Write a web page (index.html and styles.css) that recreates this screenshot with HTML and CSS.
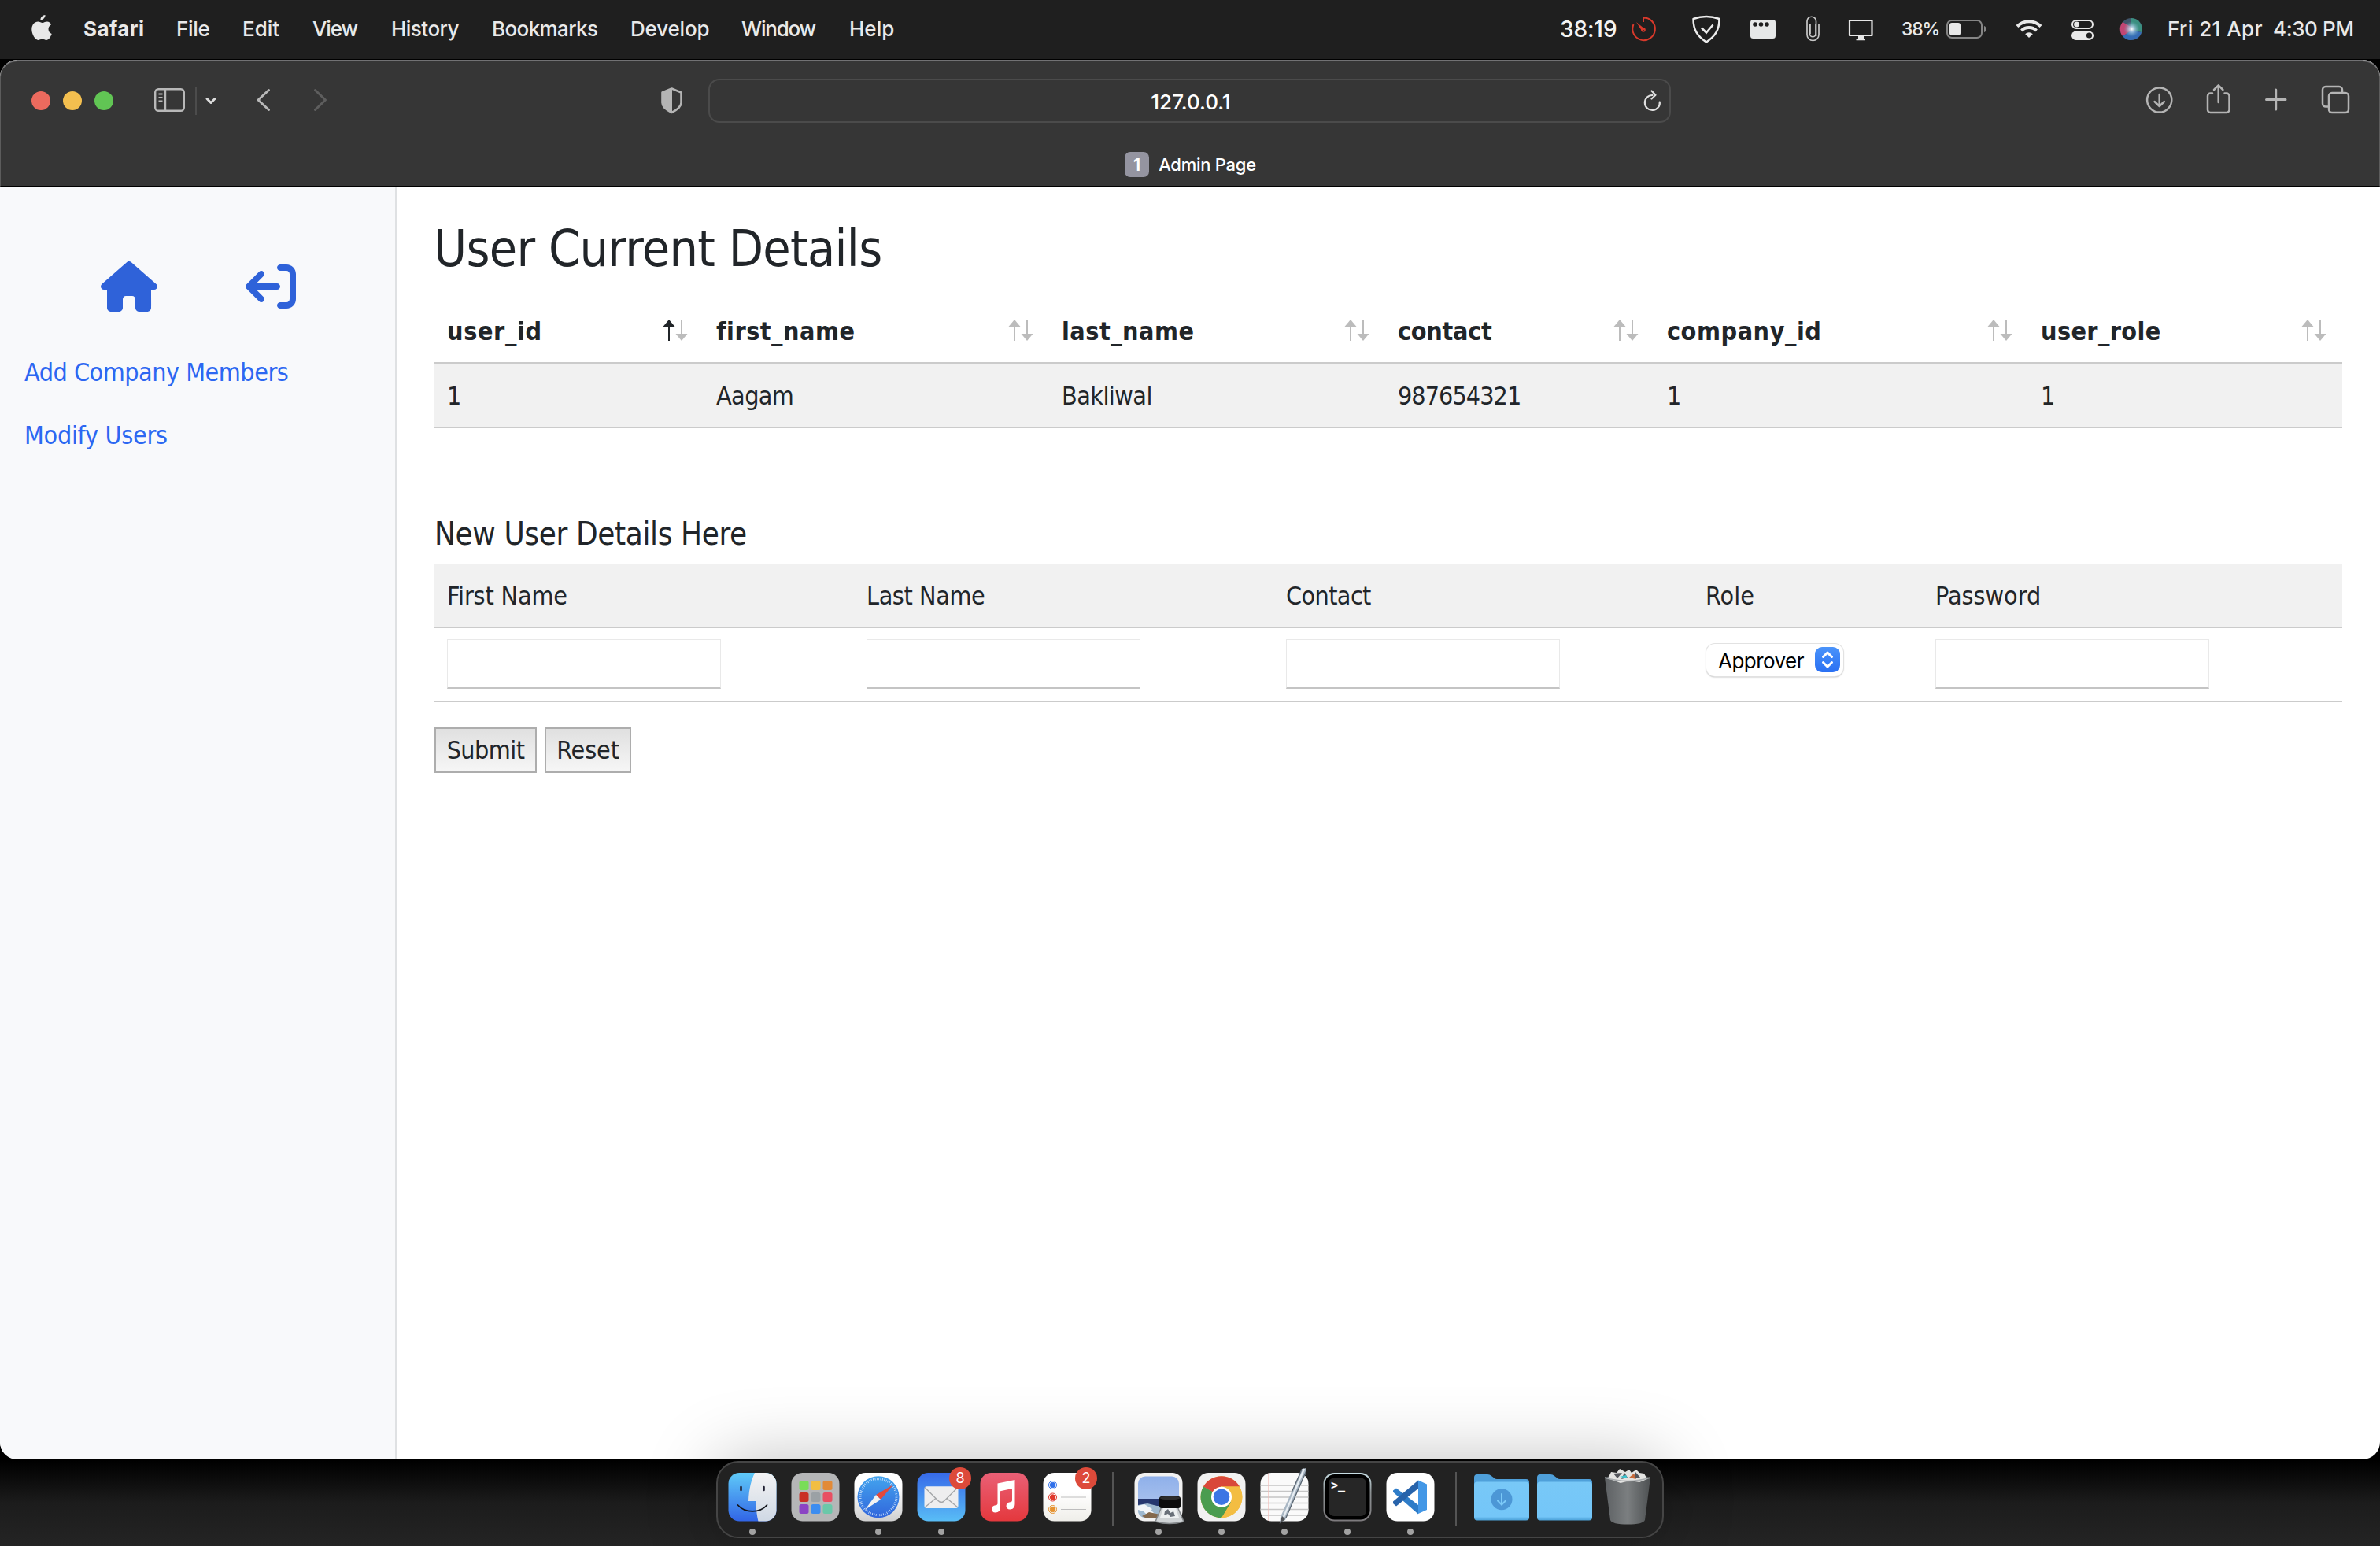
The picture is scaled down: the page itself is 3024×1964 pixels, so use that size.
FILE: index.html
```html
<!DOCTYPE html>
<html lang="en">
<head>
<meta charset="utf-8">
<title>Admin Page</title>
<link rel="stylesheet" href="styles.css">
</head>
<body>
<header class="menubar">
  <svg class="apple" viewBox="38 18 30 36"><path fill="#e8e8e8" d="M57.5 19c.3 3-2.600 6.300-6 6.500-.4-3.300 2.800-6.400 6-6.500zM65 31.200c-2.300 1.400-3.500 3.300-3.500 5.700 0 2.900 1.700 5 4.200 6-1.200 3.800-4 8-6.800 8-2 0-2.600-1.200-5.200-1.200s-3.400 1.200-5.200 1.200c-3.700 0-8.200-7.300-8.200-13.600 0-6 3.800-9.700 7.900-9.700 2.300 0 4.300 1.500 5.500 1.500s3.500-1.700 6.300-1.700c2.100 0 3.900 1.200 5 3.800z"/></svg>
  <nav class="menus">
    <span class="app">Safari</span><span class="file">File</span><span>Edit</span><span class="view">View</span><span class="history">History</span><span class="bookmarks">Bookmarks</span><span class="develop">Develop</span><span class="win">Window</span><span>Help</span>
  </nav>
  <div class="status">
    <span class="timer">38:19</span>
    <svg width="36" viewBox="2070 0 36 76"><path d="M2088 28v-5.500a14.300 14.300 0 1 1-12.500 8.500" fill="none" stroke="#d8392b" stroke-width="2"/><path d="M2079 28l11 9-3.500 3z" fill="#d8392b"/><circle cx="2088" cy="38" r="2" fill="none" stroke="#d8392b" stroke-width="1.600"/></svg>
    <svg width="40" viewBox="2148 0 40 76" class="g42"><path d="M2151.500 24c11-4 22-4 33 0 0 14-5 22-16.500 29.500-11.500-7.500-16.500-15.500-16.500-29.500z" fill="none" stroke="#ececec" stroke-width="2.500" stroke-linejoin="round"/><path d="M2162 35.500l6 6 8.500-10" fill="none" stroke="#ececec" stroke-width="2.600"/></svg>
    <svg width="32" viewBox="2224 0 32 76" class="g36"><rect x="2224" y="25" width="32" height="24" rx="3.500" fill="#e6e8e8"/><g fill="#1f1f1f"><circle cx="2230" cy="31" r="2.800"/><circle cx="2237.500" cy="31" r="2.800"/><circle cx="2245" cy="31" r="2.800"/></g></svg>
    <svg width="18" viewBox="2294 0 18 76" class="g38"><path d="M2307 30v13a3.500 3.500 0 0 1-7.500 0V31M2307.500 46V27a5.500 5.500 0 0 0-11.500 0v17a7.500 7.500 0 0 0 15 0V30M2300 43V31" fill="none" stroke="#c8c8c8" stroke-width="1.700"/></svg>
    <svg width="32" viewBox="2348 0 32 76" class="g36"><path d="M2350 26h28.500v19H2350z" fill="none" stroke="#e6e6e6" stroke-width="2.200" stroke-linejoin="round"/><path d="M2361 45h7v4h2v2.300h-11.500V49h2.500z" fill="#e6e6e6"/></svg>
    <span class="percent">38%</span>
    <svg width="54" viewBox="2472 0 54 76" class="g6"><rect x="2474" y="26" width="44" height="22" rx="6" fill="none" stroke="#858585" stroke-width="2"/><rect x="2477" y="29" width="14" height="16" rx="3" fill="#e8e8e8"/><path d="M2521 33c3.500 1 3.500 7 0 8z" fill="#858585"/></svg>
    <svg width="34" viewBox="2561 0 34 76" class="g35"><g fill="none" stroke="#e8e8e8" stroke-width="4"><path d="M2563 33.500a21 21 0 0 1 30 0"/><path d="M2568.500 39a13.500 13.500 0 0 1 19 0"/></g><path d="M2578 48l-4.800-4.800a6.800 6.800 0 0 1 9.600 0z" fill="#e8e8e8"/></svg>
    <svg width="30" viewBox="2631 0 30 76" class="g36"><rect x="2633" y="26" width="26" height="10" rx="5" fill="none" stroke="#e8e8e8" stroke-width="2"/><circle cx="2638.500" cy="31" r="3.400" fill="#e8e8e8"/><rect x="2632" y="39.500" width="28" height="11.500" rx="5.700" fill="#e8e8e8"/><circle cx="2654.500" cy="45" r="3.600" fill="#1f1f1f"/></svg>
    <svg width="30" viewBox="2693 0 30 76" class="g32"><defs><radialGradient id="siri"><stop offset="0" stop-color="#fff"/><stop offset=".35" stop-color="#b8d4ea" stop-opacity=".8"/><stop offset="1" stop-color="#6ab" stop-opacity="0"/></radialGradient></defs><circle cx="2708" cy="37" r="14" fill="#41566b"/><path d="M2708 23a14 14 0 0 1 13 18l-13-4z" fill="#3b8f80"/><path d="M2697 28a14 14 0 0 0 0 18l9-6 1-6z" fill="#c24573"/><path d="M2697 46a14 14 0 0 0 24-5l-13-2z" fill="#356cb5"/><circle cx="2708.500" cy="37" r="10" fill="url(#siri)"/></svg>
    <span class="date">Fri 21 Apr</span><span class="clock">4:30 PM</span>
  </div>
</header>

<main class="window">
  <div class="chrome">
    <div class="toolbar">
      <svg width="240" viewBox="36 78 240 100"><circle cx="52" cy="128" r="12" fill="#ec6a5e"/><circle cx="92" cy="128" r="12" fill="#f4bf4f"/><circle cx="132" cy="128" r="12" fill="#61c554"/><g fill="none" stroke="#b8b8b8" stroke-width="2.400"><rect x="197.200" y="113.200" width="36.600" height="27.600" rx="4"/><path d="M210 113v28"/><path d="M201.500 119.500h5M201.500 124h5M201.500 128.500h5" stroke-width="2"/></g><path d="M249 110v36" stroke="#4c4c4c" stroke-width="2"/><path d="M263 125.500l5 5 5-5" fill="none" stroke="#dcdcdc" stroke-width="3" stroke-linecap="round" stroke-linejoin="round"/></svg>
      <svg width="96" viewBox="324 78 96 100" class="g48"><path d="M341.500 114.500l-13.500 12.500 13.500 12.500" fill="none" stroke="#b8b8b8" stroke-width="3" stroke-linecap="round" stroke-linejoin="round"/><path d="M400.500 114.500l13 12.500-13 12.500" fill="none" stroke="#5e5e5e" stroke-width="3" stroke-linecap="round" stroke-linejoin="round"/></svg>
      <svg width="30" viewBox="838 78 30 100" class="g418"><path d="M853.500 112.500l12 5v13c0 5-5 9-12 12.500-7-3.500-12-7.500-12-12.500v-13z" fill="none" stroke="#b4b4b4" stroke-width="2.600" stroke-linejoin="round"/><path d="M854 112v31c-7-3.500-12.500-7.500-12.500-12.500v-13z" fill="#b4b4b4"/></svg>
      <div class="address"><span class="url">127.0.0.1</span>
        <svg class="reload" viewBox="2086 112 26 30"><path d="M2099.500 121a9.500 9.500 0 1 0 9.300 8.500" fill="none" stroke="#dedede" stroke-width="2.200" stroke-linecap="round"/><path d="M2098.500 115.500l5 5.300-5 4.700" fill="none" stroke="#dedede" stroke-width="2.200" stroke-linecap="round" stroke-linejoin="round"/></svg>
      </div>
      <svg width="262" viewBox="2726 78 262 100" class="tools"><g fill="none" stroke="#b4b4b4" stroke-width="2.500" stroke-linecap="round" stroke-linejoin="round"><circle cx="2743.700" cy="127" r="15.600"/><path d="M2743.700 120v14.500M2737.500 129l6.200 6 6.200-6"/><path d="M2811 118.500h-2.500a3.500 3.500 0 0 0-3.500 3.500v17.500a3.500 3.500 0 0 0 3.500 3.500h20.500a3.500 3.500 0 0 0 3.500-3.500V122a3.500 3.500 0 0 0-3.500-3.500h-2.500M2818.700 130v-21.500M2813 114l5.700-5.700 5.700 5.700"/><path d="M2879.500 126.500h24.500M2891.700 114v25" stroke-width="3"/><rect x="2959" y="118" width="25" height="25" rx="4"/><path d="M2958 135.500h-3a4 4 0 0 1-4-4V114a4 4 0 0 1 4-4h17a4 4 0 0 1 4 4v3.500"/></g></svg>
    </div>
    <div class="tab"><span class="favicon">1</span><span class="tab-title">Admin Page</span></div>
  </div>

  <div class="page">
    <aside class="sidebar">
      <div class="shortcuts">
        <svg width="72" height="64" viewBox="0 0 576 512"><path fill="#2f62d9" d="M575.800 255.500c0 18-15 32.100-32 32.100h-32l.7 160.200c0 2.700-.2 5.400-.5 8.100V472c0 22.100-17.900 40-40 40H456c-1.100 0-2.200 0-3.300-.1c-1.400 .1-2.800 .1-4.200 .1H416 392c-22.100 0-40-17.900-40-40V448 384c0-17.700-14.300-32-32-32H256c-17.700 0-32 14.300-32 32v64 24c0 22.100-17.900 40-40 40H160 128.100c-1.500 0-3-.1-4.500-.2c-1.200 .1-2.400 .2-3.600 .2H104c-22.100 0-40-17.900-40-40V360c0-.9 0-1.900 .1-2.800V287.600H32c-18 0-32-14-32-32.100c0-9 3-17 10-24L266.400 8c7-7 15-8 22-8s15 2 21 7L564.800 231.500c8 7 12 15 11 24z"/></svg>
        <svg width="64" height="64" viewBox="0 0 512 512"><path fill="#2f62d9" transform="rotate(180 256 256)" d="M502.600 278.600c12.500-12.500 12.500-32.800 0-45.300l-128-128c-12.500-12.500-32.800-12.500-45.300 0s-12.500 32.800 0 45.300L402.700 224 192 224c-17.700 0-32 14.300-32 32s14.300 32 32 32l210.700 0-73.400 73.400c-12.500 12.500-12.500 32.800 0 45.300s32.800 12.500 45.300 0l128-128zM160 96c17.700 0 32-14.300 32-32s-14.300-32-32-32L96 32C43 32 0 75 0 128L0 384c0 53 43 96 96 96l64 0c17.700 0 32-14.300 32-32s-14.300-32-32-32l-64 0c-17.700 0-32-14.300-32-32l0-256c0-17.700 14.300-32 32-32l64 0z"/></svg>
      </div>
      <a class="link add">Add Company Members</a>
      <a class="link modify">Modify Users</a>
    </aside>

    <section class="content">
      <h1>User Current Details</h1>
      <div class="grid users head">
        <div class="s1"><b>user_id</b><svg class="sort asc" viewBox="0 0 32 28"><path class="up" d="M8 0l7.500 9H9v18H7V9H.5z"/><path class="down" d="M24 27l7.500-9H25V0h-2v18h-6.500z"/></svg></div>
        <div class="s2"><b>first_name</b><svg class="sort" viewBox="0 0 32 28"><path class="up" d="M8 0l7.500 9H9v18H7V9H.5z"/><path class="down" d="M24 27l7.500-9H25V0h-2v18h-6.500z"/></svg></div>
        <div class="s3"><b>last_name</b><svg class="sort" viewBox="0 0 32 28"><path class="up" d="M8 0l7.500 9H9v18H7V9H.5z"/><path class="down" d="M24 27l7.500-9H25V0h-2v18h-6.500z"/></svg></div>
        <div class="s4"><b>contact</b><svg class="sort" viewBox="0 0 32 28"><path class="up" d="M8 0l7.500 9H9v18H7V9H.5z"/><path class="down" d="M24 27l7.500-9H25V0h-2v18h-6.500z"/></svg></div>
        <div class="s5"><b>company_id</b><svg class="sort" viewBox="0 0 32 28"><path class="up" d="M8 0l7.500 9H9v18H7V9H.5z"/><path class="down" d="M24 27l7.500-9H25V0h-2v18h-6.500z"/></svg></div>
        <div class="s6"><b>user_role</b><svg class="sort" viewBox="0 0 32 28"><path class="up" d="M8 0l7.500 9H9v18H7V9H.5z"/><path class="down" d="M24 27l7.500-9H25V0h-2v18h-6.500z"/></svg></div>
      </div>
      <div class="grid users shaded">
        <div>1</div><div class="v2">Aagam</div><div class="v3">Bakliwal</div><div class="v4">987654321</div><div>1</div><div>1</div>
      </div>

      <h2>New User Details Here</h2>
      <div class="grid form shaded">
        <div class="f1">First Name</div><div class="f2">Last Name</div><div class="f3">Contact</div><div class="f4">Role</div><div class="f5">Password</div>
      </div>
      <div class="grid form fields">
        <div><span class="field"></span></div><div><span class="field"></span></div><div><span class="field"></span></div>
        <div><span class="select"><span class="choice">Approver</span><svg width="32" height="32" viewBox="0 0 32 32"><defs><linearGradient id="knob" x2="0" y2="1"><stop stop-color="#4a93fa"/><stop offset="1" stop-color="#2a70f3"/></linearGradient></defs><rect width="32" height="32" rx="9" fill="url(#knob)"/><path d="M10.500 12.500L16 7l5.500 5.500M10.500 19.500L16 25l5.500-5.500" fill="none" stroke="#fff" stroke-width="3" stroke-linecap="round" stroke-linejoin="round"/></svg></span></div>
        <div><span class="field"></span></div>
      </div>
      <div class="actions"><button class="submit">Submit</button><button class="reset">Reset</button></div>
    </section>
  </div>
</main>

<footer class="dock">
  <svg viewBox="0 0 80 94"><defs><linearGradient id="fblue" x2="0" y2="1"><stop stop-color="#5fcaf8"/><stop offset="1" stop-color="#3164e6"/></linearGradient><linearGradient id="fgrey" x2="0" y2="1"><stop stop-color="#f3f3f4"/><stop offset="1" stop-color="#cfd8e4"/></linearGradient><clipPath id="tile"><rect x="9.500" y="13" width="61" height="61.500" rx="14"/></clipPath></defs><g clip-path="url(#tile)"><path fill="url(#fblue)" d="M9 13h62v62H9z"/><path fill="url(#fgrey)" d="M43 13c-4 8-7.500 20-8 36h9.500c0 9 1 18 3 26H71V13z"/></g><path d="M25.500 31v4M54.500 31v4" stroke="#223" stroke-width="2.600" stroke-linecap="round"/><path d="M21.500 54c9 10.500 28 10.500 37 0" fill="none" stroke="#14161c" stroke-width="1.800" stroke-linecap="round"/><circle cx="40" cy="88" r="4" fill="#a2a2a2"/></svg>
  <svg viewBox="0 0 80 94"><rect x="9.500" y="13" width="61" height="61.500" rx="14" fill="#b5b6b7"/><rect x="19.500" y="23" width="12" height="12" rx="2.500" fill="#79dd57"/><rect x="34.500" y="23" width="12" height="12" rx="2.500" fill="#f2be43"/><rect x="49.500" y="23" width="12" height="12" rx="2.500" fill="#e28a37"/><rect x="19.500" y="38" width="12" height="12" rx="2.500" fill="#c93026"/><rect x="34.500" y="38" width="12" height="12" rx="2.500" fill="#9ba1a5"/><rect x="49.500" y="38" width="12" height="12" rx="2.500" fill="#e84f62"/><rect x="19.500" y="53" width="12" height="12" rx="2.500" fill="#8b44c4"/><rect x="34.500" y="53" width="12" height="12" rx="2.500" fill="#3c8df0"/><rect x="49.500" y="53" width="12" height="12" rx="2.500" fill="#6bc8a9"/></svg>
  <svg viewBox="0 0 80 94"><defs><linearGradient id="sback" x2="0" y2="1"><stop offset=".3" stop-color="#fff"/><stop offset="1" stop-color="#cfcfcf"/></linearGradient><linearGradient id="sface" x2="0" y2="1"><stop stop-color="#43a4ee"/><stop offset="1" stop-color="#3166dc"/></linearGradient></defs><rect x="9.500" y="13" width="61" height="61.500" rx="14" fill="url(#sback)"/><circle cx="40" cy="43.700" r="26.500" fill="url(#sface)"/><circle cx="40" cy="43.700" r="23" fill="none" stroke="#cfe4fa" stroke-width="3" stroke-dasharray=".8 1.600"/><path d="M59 28L43 47l-6-6z" fill="#e3493c"/><path d="M23 60l20-13-6-6z" fill="#f2f2f2"/><circle cx="40" cy="88" r="4" fill="#a2a2a2"/></svg>
  <svg viewBox="0 0 80 94"><defs><linearGradient id="mail" x2="0" y2="1"><stop stop-color="#376ae9"/><stop offset="1" stop-color="#59bdf6"/></linearGradient></defs><rect x="9.500" y="13" width="61" height="61.500" rx="14" fill="url(#mail)"/><rect x="18.500" y="30.300" width="43" height="27.700" rx="3" fill="#eeeeef"/><path d="M19 31.500l17 17c2.500 2.500 5.500 2.500 8 0l17-17M19 57l14-11.500M61 57L47 45.500" fill="none" stroke="#a3a5a8" stroke-width="1.300"/><circle cx="64" cy="20" r="14" fill="#dd4a3a"/><text x="64" y="25.500" class="badge">8</text><circle cx="40" cy="88" r="4" fill="#a2a2a2"/></svg>
  <svg viewBox="0 0 80 94"><defs><linearGradient id="music" x2="0" y2="1"><stop stop-color="#ea6076"/><stop offset="1" stop-color="#e4383d"/></linearGradient></defs><rect x="9.500" y="13" width="61" height="61.500" rx="14" fill="url(#music)"/><path d="M31.500 26.500l22-4.500v30.500c0 4.500-2.500 6.800-6 7-3 .2-5-1.500-5-4.200 0-3 2-4.600 5-5.100 1.800-.3 2.500-.7 2.500-2.500V33l-15 3.200v20.300c0 4.500-2.500 6.800-6 7-3 .2-5-1.500-5-4.200 0-3 2-4.600 5-5.100 1.800-.3 2.500-.7 2.500-2.500z" fill="#fff"/></svg>
  <svg viewBox="0 0 80 94"><defs><linearGradient id="paper" x2="0" y2="1"><stop offset=".4" stop-color="#fff"/><stop offset="1" stop-color="#efeee9"/></linearGradient></defs><rect x="9.500" y="13" width="61" height="61.500" rx="14" fill="url(#paper)"/><path d="M32 28.500h32M32 44h32M32 59.500h32" stroke="#bdbdbd" stroke-width="1.200"/><g stroke-width="1"><g fill="#2f6fea" stroke="#2f6fea"><circle cx="21.500" cy="28.500" r="3.200"/><circle cx="21.500" cy="28.500" r="5" fill="none"/></g><g fill="#e0392d" stroke="#e0392d"><circle cx="21.500" cy="44" r="3.200"/><circle cx="21.500" cy="44" r="5" fill="none"/></g><g fill="#e6922e" stroke="#e6922e"><circle cx="21.500" cy="59.500" r="3.200"/><circle cx="21.500" cy="59.500" r="5" fill="none"/></g></g><circle cx="64" cy="20" r="14" fill="#dd4a3a"/><text x="64" y="25.500" class="badge">2</text></svg>
  <span class="divider"></span>
  <svg viewBox="0 0 80 94"><defs><linearGradient id="sky" x2="0" y2="1"><stop stop-color="#8fb0ea"/><stop offset="1" stop-color="#b4c9ef"/></linearGradient></defs><rect x="9.500" y="13" width="61" height="61.500" rx="13" fill="#f1f1f1"/><rect x="14" y="17.500" width="52" height="52.500" rx="9" fill="url(#sky)"/><path d="M14 46h52v9H14z" fill="#26376e"/><path d="M14 54l12-2 12 3h28v15H23c-5 0-9-4-9-9z" fill="#9fb9cf"/><path d="M14 55l8-2 10 6-4 5-14-4zM20 61l12 1 4 4-10 1z" fill="#f3f6f8"/><path d="M19 68l9-5 14 3v4H23z" fill="#84694c"/><path d="M44 56h20l8 19q-18 5-36 0z" fill="#cfd3d5" stroke="#85898c" stroke-width="1.500"/><path d="M46 58h16l4 12H42z" fill="#edf0f1"/><path d="M48 62l4-3 3 5 4-2 2 6-6 1-3-4-5 2z" fill="#697079"/><rect x="41" y="43" width="27" height="15" rx="3" fill="#0c0c0c"/><ellipse cx="54.500" cy="45" rx="12.500" ry="2.300" fill="#2d2d2d"/><circle cx="40" cy="88" r="4" fill="#a2a2a2"/></svg>
  <svg viewBox="0 0 80 94"><rect x="9.500" y="13" width="61" height="61.500" rx="14" fill="#f1f1f1"/><circle cx="40" cy="43.700" r="26.500" fill="#f3bd42"/><path d="M40 43.700L17 30.500a26.500 26.500 0 0 0 23 39.700l13-20z" fill="#4a9c50"/><path d="M40 43.700L17 30.500a26.500 26.500 0 0 1 46 0H40z" fill="#d9483a"/><path d="M17 30.500L29 50l11-6zM40 70.200L52 50l-12-6z" fill="#4a9c50"/><path d="M62.800 30.500H40v14l12 6-12 19.700a26.500 26.500 0 0 0 22.800-39.700z" fill="#f3bd42"/><circle cx="40" cy="43.700" r="13" fill="#fff"/><circle cx="40" cy="43.700" r="10.300" fill="#3c76e4"/><circle cx="40" cy="88" r="4" fill="#a2a2a2"/></svg>
  <svg viewBox="0 0 80 94"><rect x="9.500" y="13" width="61" height="61.500" rx="14" fill="#fafafa"/><path d="M9.500 29h61M9.500 36.500h61M9.500 44h61M9.500 51.500h61M9.500 59.500h61M11 67h58" stroke="#c5c5c5" stroke-width="1.300"/><path d="M20 13.500v60.500" stroke="#f2b9b5" stroke-width="1.200"/><path d="M62 8l6-1-1 7-26 59-7 4 1-8z" fill="#a9b7c4"/><path d="M65 8L39 69" stroke="#e8eef3" stroke-width="2.200"/><path d="M67.500 11L42 70M62 9L49 38" stroke="#5d6873" stroke-width="1.300"/><path d="M37 68l4 4-7.500 6z" fill="#505356"/><circle cx="40" cy="88" r="4" fill="#a2a2a2"/></svg>
  <svg viewBox="0 0 80 94"><defs><linearGradient id="rim" x2="0" y2="1"><stop stop-color="#c9e0e6"/><stop offset=".4" stop-color="#8b9092"/><stop offset="1" stop-color="#7d7a7d"/></linearGradient></defs><rect x="9.500" y="13" width="61" height="61.500" rx="14" fill="url(#rim)"/><rect x="11.500" y="15" width="57" height="57.500" rx="12" fill="#000"/><rect x="16" y="19.500" width="48" height="48.500" rx="7" fill="#262626"/><text x="19" y="34" class="prompt">&gt;_</text><circle cx="40" cy="88" r="4" fill="#a2a2a2"/></svg>
  <svg viewBox="0 0 80 94"><rect x="9.500" y="13" width="61" height="61.500" rx="14" fill="#fff"/><path d="M18 35.500l4-3L50 54v11.500L18 37.500z" fill="#2e7cc8"/><path d="M18 52l4 3.500L50 33V22.500L18 49.500z" fill="#2763ab"/><path d="M50 22.500l11 5v32.500l-11 5z" fill="#4397e6"/><circle cx="40" cy="88" r="4" fill="#a2a2a2"/></svg>
  <span class="divider"></span>
  <svg viewBox="0 0 80 94"><defs><linearGradient id="folder" x2="0" y2="1"><stop stop-color="#78c8f7"/><stop offset=".9" stop-color="#74c6f8"/><stop offset="1" stop-color="#4ba1d8"/></linearGradient></defs><path d="M5 19q0-4 4-4h13q3 0 5 2l4 3q1 1 3 1h37q4 0 4 4v30H5z" fill="#4fa0da"/><rect x="5" y="24.500" width="70" height="49" rx="4" fill="url(#folder)"/><circle cx="40" cy="46.700" r="13.500" fill="#4c97d6"/><path d="M40 40v13M35 48.500l5 5 5-5" fill="none" stroke="#7ccaf8" stroke-width="2" stroke-linecap="round"/></svg>
  <svg viewBox="0 0 80 94"><path d="M5 19q0-4 4-4h13q3 0 5 2l4 3q1 1 3 1h37q4 0 4 4v30H5z" fill="#4fa0da"/><rect x="5" y="24.500" width="70" height="49" rx="4" fill="url(#folder)"/></svg>
  <svg viewBox="0 0 80 94"><defs><linearGradient id="bin"><stop stop-color="#686c6f"/><stop offset=".5" stop-color="#8b8f91"/><stop offset="1" stop-color="#55595b"/></linearGradient></defs><path d="M11 19q29-10 58 0l-7 54q-2 5.500-22 5.500t-22-5.500z" fill="url(#bin)" opacity=".85"/><path d="M15 20l4-8 7 1 4-5 7 4 5-3 3 4 6-4 4 4 6 1 4 7-10 4-12-2-12 3z" fill="#e4e4e2"/><path d="M22 14l5 6 6-7zM36 13l4 6-8 2zM50 12l6 7-9 1z" fill="#54565c"/><path d="M30 18l8-2 2 4z" fill="#3cc4cf"/><path d="M42 19l6-5 3 7z" fill="#c66b3b"/><path d="M11 19q29 9 58 0" fill="none" stroke="#a9adaf" stroke-width="1.500"/></svg>
</footer>
</body>
</html>
```
FILE: styles.css
```css
* { box-sizing: border-box; }
body {
  margin: 0;
  width: 3024px;
  height: 1964px;
  overflow: hidden;
  display: flex;
  flex-direction: column;
  background: linear-gradient(#1f1f1f 0 75px, #000 75px 1856px, #1c1c1c 1910px, #242424 1964px);
  font-family: Inter, sans-serif;
}
svg { display: block; flex: none; }

/* Menu bar */
.menubar { height: 76px; flex: none; display: flex; align-items: center; color: #e9e9e9; font-size: 26px; font-weight: 500; line-height: 74px; white-space: pre; background: linear-gradient(#1f1f1f 75px, #000 75px); }
.apple { width: 30px; height: 36px; margin: -4px 0 0 38px; }
.menus { display: grid; grid-template-columns: 118px 84px 89px 100px 128px 176px 141px 137px 70px; margin-left: 38px; height: 76px; }
.app { font-weight: 700; letter-spacing: .43px; }
.file { letter-spacing: -.3px; }
.view { letter-spacing: -1.1px; }
.history { letter-spacing: -.53px; }
.bookmarks { letter-spacing: -.61px; }
.develop { letter-spacing: -.17px; }
.win { letter-spacing: -1.2px; }
.status { display: flex; margin-left: auto; padding-right: 31px; height: 76px; }
.status svg { height: 76px; }
.timer { font-size: 28px; width: 88px; color: #f4f4f4; letter-spacing: -.1px; }
.percent { font-size: 23px; margin-left: 36px; width: 50px; letter-spacing: -1.2px; }
.g6 { margin-left: 6px; }
.g32 { margin-left: 32px; }
.g35 { margin-left: 35px; }
.g36 { margin-left: 36px; }
.g38 { margin-left: 38px; }
.g42 { margin-left: 42px; }
.date { margin-left: 31px; width: 134px; letter-spacing: .41px; }
.clock { width: 105px; letter-spacing: -.4px; }

/* Browser window */
.window { height: 1778px; flex: none; display: flex; flex-direction: column; border-radius: 22px; overflow: hidden; background: #fff; }
.chrome { height: 161px; flex: none; background: #363636; border: 1px solid #5c5c5c; border-top: 2px solid #727274; border-bottom: 1px solid #000; border-radius: 22px 22px 0 0; }
.toolbar { height: 100px; display: flex; padding-left: 35px; }
.toolbar > svg { height: 100px; }
.g48 { margin-left: 48px; }
.g418 { margin-left: 418px; }
.tools { margin-left: auto; margin-right: 35px; }
.address { position: relative; margin: 22px 0 0 32px; width: 1223px; height: 56px; border: 2px solid #4b4b4b; border-radius: 14px; display: flex; justify-content: center; align-items: center; color: #fff; font-size: 26px; font-weight: 500; }
.url { line-height: 52px; padding: 3px 0 0 3px; }
.reload { position: absolute; right: 9px; top: 10px; width: 26px; height: 30px; }
.tab { display: flex; justify-content: center; align-items: center; height: 32px; margin-top: 15px; padding-left: 1px; gap: 12px; color: #fff; font-size: 22px; font-weight: 500; line-height: 32px; }
.tab-title { letter-spacing: -.26px; }
.favicon { width: 31px; height: 32px; border-radius: 7px; background: #9494a0; text-align: center; font-weight: 600; }

/* Page */
.page { flex: 1; display: flex; color: #212529; font-family: "DejaVu Sans Condensed", "DejaVu Sans", sans-serif; font-stretch: condensed; font-size: 32px; line-height: 48px; white-space: nowrap; }
.sidebar { width: 504px; flex: none; background: #f8f9fb; border-right: 2px solid #dfe1e3; padding-top: 95px; display: flex; flex-direction: column; }
.shortcuts { display: flex; gap: 112px; padding-left: 128px; margin-bottom: 53px; }
.link { color: #2c67f2; padding-left: 31px; height: 48px; }
.add { letter-spacing: -.48px; }
.modify { margin-top: 32px; letter-spacing: -.28px; }
.content { flex: 1; padding: 41px 48px 0; }
h1 { margin: 0 0 26px -1px; font-size: 64px; font-weight: 400; line-height: 76px; letter-spacing: -.7px; }
h2 { margin: 110px 0 14px; font-size: 40px; font-weight: 400; line-height: 48px; letter-spacing: -.38px; }
.grid { display: grid; height: 82px; border-bottom: 2px solid #cbcbcb; }
.users { grid-template-columns: 342px 439px 427px 342px 475px 399px; }
.form { grid-template-columns: 533px 533px 533px 292px 533px; }
.grid > div { padding: 17px 16px 0; }
.shaded { background: #f1f1f1; }
.head > div { display: flex; justify-content: space-between; padding-right: 20px; }
.s1 { letter-spacing: .65px; }
.s2 { letter-spacing: .52px; }
.s3 { letter-spacing: .5px; }
.s4 { letter-spacing: -.27px; }
.s5 { letter-spacing: .55px; }
.s6 { letter-spacing: .4px; }
.v2 { letter-spacing: -.6px; }
.v3 { letter-spacing: -.55px; }
.v4 { letter-spacing: -.94px; }
.f1 { letter-spacing: -.15px; }
.f2 { letter-spacing: -.4px; }
.f3 { letter-spacing: -.6px; }
.sort { width: 32px; height: 28px; margin-top: 9px; fill: #bcbcbc; }
.asc .up { fill: #212529; }
.fields { height: 94px; }
.grid.fields > div { padding-top: 14px; }
.field { display: block; width: 348px; height: 63px; border: 1px solid #e9e9e9; border-bottom: 2px solid #c4c4c4; background: #fff; }
.select { display: flex; justify-content: space-between; align-items: center; width: 174px; height: 41px; margin: 6px 0 0 1px; padding: 0 4px 2px 15px; border-radius: 11px; background: #fff; box-shadow: 0 0 0 1px #e2e2e2, 0 1px 2px rgba(0,0,0,.4); color: #000; font: 400 26px/38px Inter, sans-serif; }
.choice { letter-spacing: -.55px; padding-top: 5px; }
.actions { display: flex; gap: 10px; margin-top: 32px; }
button { height: 58px; padding: 0; border: 2px solid #adadad; background: linear-gradient(#e0e0e0, #f6f6f6); color: #212529; font: inherit; font-stretch: condensed; }
.submit { width: 130px; letter-spacing: -.57px; }
.reset { width: 110px; letter-spacing: -.13px; }

/* Dock */
.dock { position: relative; flex: none; display: flex; width: 1204px; height: 98px; margin: 2px auto 0; padding: 0 4px; border: 2px solid #454545; border-radius: 28px; background: #222; box-shadow: 0 0 90px rgba(0,0,0,.26); }
.dock svg { width: 80px; height: 94px; overflow: visible; }
.divider { width: 2px; height: 69px; margin: 12px 17px 0; background: #545454; }
.badge { fill: #fff; font: 400 18px Inter, sans-serif; text-anchor: middle; }
.prompt { fill: #fff; font: 700 15px "DejaVu Sans Mono", monospace; }
```
